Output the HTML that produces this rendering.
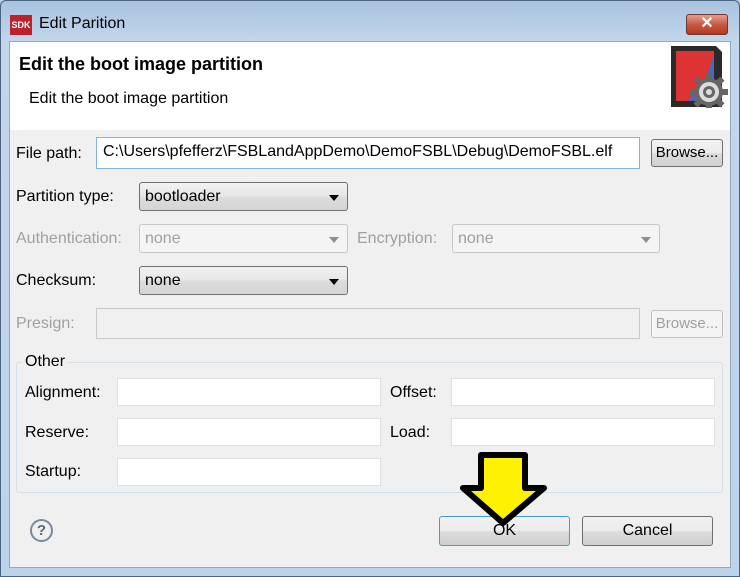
<!DOCTYPE html><html><head><style>
body{margin:0;width:740px;height:577px;overflow:hidden;font-family:"Liberation Sans",sans-serif;font-size:16px;color:#000;background:#b9d1ea}
.a{position:absolute}
.frame{left:0;top:0;width:738px;height:575px;border:1px solid #4d6480;border-radius:6px 6px 0 0;background:linear-gradient(#a9c2de,#c2d6ec 40px,#bcd3ea)}
.client{left:9px;top:41px;width:722px;height:527px;background:#f0f0f0;border:1px solid #8ea7c3;box-sizing:border-box}
.tb{background:#fff;border:1px solid #abadb3;box-sizing:border-box}
.btn{border:1px solid #707070;border-radius:3px;background:linear-gradient(#f2f2f2,#ebebeb 50%,#dddddd 51%,#cfcfcf);box-sizing:border-box;text-align:center;font-size:15px}
.dd{border:1px solid #707070;border-radius:3px;background:linear-gradient(#f2f2f2,#e6e6e6 50%,#dcdcdc 51%,#d5d5d5);box-sizing:border-box;padding:5px 0 0 5px}
.dd:after{content:"";position:absolute;right:8px;top:12px;border:5px solid transparent;border-top:6px solid #000;border-bottom:0}
.dis{color:#a0a0a0}
.dd.dis{background:#f4f4f4;border-color:#c8c8c8}
.dd.dis:after{border-top-color:#909090}
</style></head><body>
<div class="a frame"></div>
<div class="a" style="left:10px;top:15px;width:22px;height:20px;background:#c0202a;color:#fff;font:bold 9px 'Liberation Sans';line-height:20px;text-align:center">SDK</div>
<div class="a" style="left:39px;top:15px;font-size:16px;color:#000">Edit Parition</div>
<div class="a" style="left:686px;top:14px;width:42px;height:21px;border:1px solid #6d3a30;border-radius:3px;background:linear-gradient(#e8a090,#c75a43 50%,#b8371e);box-sizing:border-box;color:#fff;font:bold 16px 'Liberation Sans';text-align:center;line-height:18px">✕</div>
<div class="a client"></div>
<div class="a" style="left:10px;top:42px;width:720px;height:88px;background:#fff"></div>
<div class="a" style="left:19px;top:54px;font-size:18px;font-weight:bold">Edit the boot image partition</div>
<div class="a" style="left:29px;top:90px">Edit the boot image partition</div>
<svg class="a" style="left:668px;top:42px" width="62" height="66" viewBox="0 0 62 66"><path d="M3 4h45l6 6v55H3z" fill="#2a2a2a"/><path d="M8 9h38v50H8z" fill="#d33"/><path d="M46 9v50H20C34 45 42 30 46 9z" fill="#4a6ab8"/><g transform="translate(41,50)"><circle r="14" fill="#666"/><g fill="#666"><rect x="-3" y="-19" width="6" height="38"/><rect x="-19" y="-3" width="38" height="6"/><rect x="-3" y="-19" width="6" height="38" transform="rotate(45)"/><rect x="-3" y="-19" width="6" height="38" transform="rotate(-45)"/></g><circle r="10" fill="#ddd"/><circle r="6" fill="#666"/><circle r="3" fill="#ddd"/></g></svg>
<div class="a" style="left:16px;top:145px">File path:</div>
<div class="a tb" style="left:96px;top:137px;width:544px;height:32px;border-color:#7eb4ea;padding:5px 0 0 6px">C:\Users\pfefferz\FSBLandAppDemo\DemoFSBL\Debug\DemoFSBL.elf</div>
<div class="a btn" style="left:651px;top:139px;width:72px;height:28px;line-height:26px">Browse...</div>
<div class="a" style="left:16px;top:188px">Partition type:</div>
<div class="a dd" style="left:139px;top:182px;width:209px;height:29px">bootloader</div>
<div class="a dis" style="left:16px;top:230px">Authentication:</div>
<div class="a dd dis" style="left:139px;top:224px;width:209px;height:29px">none</div>
<div class="a dis" style="left:357px;top:230px">Encryption:</div>
<div class="a dd dis" style="left:452px;top:224px;width:208px;height:29px">none</div>
<div class="a" style="left:16px;top:272px">Checksum:</div>
<div class="a dd" style="left:139px;top:266px;width:209px;height:29px">none</div>
<div class="a dis" style="left:16px;top:315px">Presign:</div>
<div class="a tb" style="left:96px;top:308px;width:544px;height:31px;background:#f0f0f0;border-color:#c8c8c8"></div>
<div class="a btn" style="left:651px;top:310px;width:72px;height:28px;line-height:26px;color:#a0a0a0;border-color:#c0c0c0;background:#f4f4f4">Browse...</div>
<div class="a" style="left:16px;top:362px;width:707px;height:131px;border:1px solid #d5dfe5;border-radius:3px;box-sizing:border-box"></div>
<div class="a" style="left:22px;top:353px;background:#f0f0f0;padding:0 3px">Other</div>
<div class="a" style="left:25px;top:384px">Alignment:</div>
<div class="a tb" style="left:117px;top:378px;width:264px;height:28px;border-color:#e0e0e0"></div>
<div class="a" style="left:390px;top:384px">Offset:</div>
<div class="a tb" style="left:451px;top:378px;width:264px;height:28px;border-color:#e0e0e0"></div>
<div class="a" style="left:25px;top:424px">Reserve:</div>
<div class="a tb" style="left:117px;top:418px;width:264px;height:28px;border-color:#e0e0e0"></div>
<div class="a" style="left:390px;top:424px">Load:</div>
<div class="a tb" style="left:451px;top:418px;width:264px;height:28px;border-color:#e0e0e0"></div>
<div class="a" style="left:25px;top:463px">Startup:</div>
<div class="a tb" style="left:117px;top:458px;width:264px;height:28px;border-color:#e0e0e0"></div>
<div class="a" style="left:30px;top:519px;width:19px;height:19px;border:2px solid #7a8a9a;border-radius:50%;text-align:center;font-weight:bold;color:#5a6a7a;line-height:19px;font-size:15px">?</div>
<div class="a btn" style="left:439px;top:516px;width:131px;height:30px;line-height:28px;border-color:#3c9fd8;border-radius:3px;font-size:16px">OK</div>
<div class="a btn" style="left:582px;top:516px;width:131px;height:30px;line-height:28px;font-size:16px">Cancel</div>
<svg class="a" style="left:455px;top:450px" width="100" height="80"><path d="M26 5H70V38H89L48 73L8 38H26Z" fill="#fff200" stroke="#000" stroke-width="6" stroke-linejoin="round"/></svg>
</body></html>
